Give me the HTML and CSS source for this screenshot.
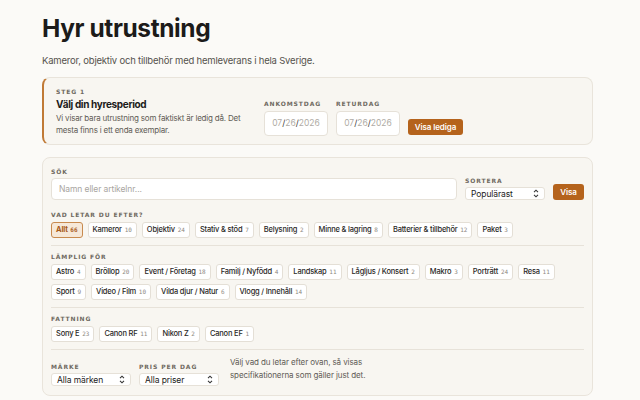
FILE: index.html
```html
<!DOCTYPE html>
<html lang="sv">
<head>
    <meta charset="UTF-8">
    <title>Hyr utrustning</title>
    <link rel="stylesheet" href="styles.css">
</head>
<body>
    <main class="page">
        <h1>Hyr utrustning</h1>
        <p class="lead">Kameror, objektiv och tillbehör med hemleverans i hela Sverige.</p>

        <!-- Steg 1 -->
        <section class="step-card">
            <div class="step-text">
                <div class="label">Steg 1</div>
                <h2>Välj din hyresperiod</h2>
                <p>Vi visar bara utrustning som faktiskt är ledig då. Det mesta finns i ett enda exemplar.</p>
            </div>
            <div class="dates">
                <div class="field">
                    <div class="label">Ankomstdag</div>
                    <div class="date-input">07<b>/</b>26<b>/</b>2026</div>
                </div>
                <div class="field">
                    <div class="label">Returdag</div>
                    <div class="date-input">07<b>/</b>26<b>/</b>2026</div>
                </div>
                <button class="btn btn-dates">Visa lediga</button>
            </div>
        </section>

        <!-- Filter -->
        <section class="filter-card">
            <div class="search-row">
                <div class="field grow">
                    <div class="label">Sök</div>
                    <div class="search-input">Namn eller artikelnr...</div>
                </div>
                <div class="field">
                    <div class="label">Sortera</div>
                    <div class="select">Populärast
                        <svg width="6" height="9" viewBox="0 0 6 9"><path d="M1 3.2 3 1.2 5 3.2M1 5.8 3 7.8 5 5.8" fill="none" stroke="#333" stroke-width="1.1"/></svg>
                    </div>
                </div>
                <button class="btn btn-show">Visa</button>
            </div>

            <div class="group first">
                <div class="label">Vad letar du efter?</div>
                <div class="chips">
                    <span class="chip active">Allt <i>66</i></span>
                    <span class="chip">Kameror <i>10</i></span>
                    <span class="chip">Objektiv <i>24</i></span>
                    <span class="chip">Stativ &amp; stöd <i>7</i></span>
                    <span class="chip">Belysning <i>2</i></span>
                    <span class="chip">Minne &amp; lagring <i>8</i></span>
                    <span class="chip">Batterier &amp; tillbehör <i>12</i></span>
                    <span class="chip">Paket <i>3</i></span>
                </div>
            </div>

            <div class="group">
                <div class="label">Lämplig för</div>
                <div class="chips">
                    <span class="chip">Astro <i>4</i></span>
                    <span class="chip">Bröllop <i>20</i></span>
                    <span class="chip">Event / Företag <i>18</i></span>
                    <span class="chip">Familj / Nyfödd <i>4</i></span>
                    <span class="chip">Landskap <i>11</i></span>
                    <span class="chip">Lågljus / Konsert <i>2</i></span>
                    <span class="chip">Makro <i>3</i></span>
                    <span class="chip">Porträtt <i>24</i></span>
                    <span class="chip">Resa <i>11</i></span>
                    <span class="chip">Sport <i>9</i></span>
                    <span class="chip">Video / Film <i>10</i></span>
                    <span class="chip">Vilda djur / Natur <i>6</i></span>
                    <span class="chip">Vlogg / Innehåll <i>14</i></span>
                </div>
            </div>

            <div class="group">
                <div class="label">Fattning</div>
                <div class="chips">
                    <span class="chip">Sony E <i>23</i></span>
                    <span class="chip">Canon RF <i>11</i></span>
                    <span class="chip">Nikon Z <i>2</i></span>
                    <span class="chip">Canon EF <i>1</i></span>
                </div>
            </div>

            <div class="group bottom-row">
                <div class="field">
                    <div class="label">Märke</div>
                    <div class="select">Alla märken
                        <svg width="6" height="9" viewBox="0 0 6 9"><path d="M1 3.2 3 1.2 5 3.2M1 5.8 3 7.8 5 5.8" fill="none" stroke="#333" stroke-width="1.1"/></svg>
                    </div>
                </div>
                <div class="field">
                    <div class="label">Pris per dag</div>
                    <div class="select">Alla priser
                        <svg width="6" height="9" viewBox="0 0 6 9"><path d="M1 3.2 3 1.2 5 3.2M1 5.8 3 7.8 5 5.8" fill="none" stroke="#333" stroke-width="1.1"/></svg>
                    </div>
                </div>
                <p class="hint">Välj vad du letar efter ovan, så visas specifikationerna som gäller just det.</p>
            </div>
        </section>
    </main>
</body>
</html>
```

FILE: styles.css
```css
body {
    margin: 0;
    background-color: #fbfaf7;
    font-family: Inter, "Noto Sans", sans-serif;
    color: #1c1b1a;
}

.page {
    width: 551px;
    margin-left: 42px;
    padding-top: 13px;
}

h1 {
    margin: 0;
    font-size: 24.5px;
    font-weight: 700;
    letter-spacing: -0.4px;
    line-height: 30px;
}

.lead {
    margin: 11px 0 0;
    font-size: 9.5px;
    letter-spacing: -0.2px;
    line-height: 14px;
    color: #55524d;
}

.label {
    font-family: "DejaVu Sans", sans-serif;
    font-size: 6px;
    font-weight: 700;
    letter-spacing: 0.9px;
    text-transform: uppercase;
    color: #6e6960;
    line-height: 9px;
}

.step-card {
    margin-top: 9px;
    height: 68px;
    box-sizing: border-box;
    display: flex;
    align-items: flex-start;
    background-color: #f8f6f1;
    border: 1px solid #e9e4db;
    border-left: 2px solid #c07a36;
    border-radius: 8px;
    padding: 9px 12px;
}

.step-text {
    width: 200px;
}

.step-text h2 {
    margin: 1px 0 1px;
    font-size: 10px;
    font-weight: 700;
    letter-spacing: -0.35px;
    line-height: 14px;
}

.step-text p {
    margin: 0;
    font-size: 8px;
    letter-spacing: -0.2px;
    line-height: 12px;
    color: #5f5b55;
    width: 186px;
}

.dates {
    display: flex;
    align-items: flex-end;
    gap: 8px;
    margin-left: auto;
    margin-right: 117px;
    margin-top: 12px;
}

.field .label {
    margin-bottom: 2px;
}

.dates .field .label {
    margin-bottom: 3px;
}

.date-input {
    width: 64px;
    height: 25px;
    box-sizing: border-box;
    border: 1px solid #e6e1d8;
    border-radius: 4px;
    background-color: #fff;
    font-size: 8.5px;
    line-height: 23px;
    text-align: center;
    color: #b0aca5;
}

.date-input b {
    color: #3a3733;
    font-weight: 400;
}

.btn {
    border: none;
    border-radius: 3px;
    background-color: #b5631c;
    color: #fff;
    font-family: Inter, sans-serif;
    font-weight: 600;
    font-size: 8px;
    letter-spacing: -0.1px;
    white-space: nowrap;
    padding: 0;
    cursor: pointer;
}

.btn-dates {
    width: 55px;
    height: 16px;
    margin-bottom: 1px;
}

.filter-card {
    margin-top: 12px;
    background-color: #f8f6f1;
    border: 1px solid #e9e4db;
    border-radius: 8px;
    padding: 9px 8px 8px;
    height: 239px;
    box-sizing: border-box;
}

.search-row {
    display: flex;
    align-items: flex-end;
    gap: 8px;
}

.grow {
    flex: 1;
}

.search-input {
    height: 22px;
    box-sizing: border-box;
    border: 1px solid #e6e1d8;
    border-radius: 4px;
    background-color: #fff;
    font-size: 8.5px;
    letter-spacing: -0.1px;
    line-height: 20px;
    padding: 0 7px;
    color: #a9a59f;
}

.select {
    width: 80px;
    height: 13px;
    display: flex;
    align-items: center;
    justify-content: space-between;
    box-sizing: border-box;
    border: 1px solid #e6e1d8;
    border-radius: 3px;
    background-color: #fff;
    font-size: 8.5px;
    letter-spacing: -0.1px;
    color: #1c1b1a;
    padding: 0 5px;
}

.btn-show {
    width: 31px;
    height: 16px;
}

.group {
    border-top: 1px solid #e7e2d9;
    margin-top: 7px;
    padding-top: 6px;
}

.group.first {
    border-top: none;
    margin-top: 10px;
    padding-top: 0;
}

.group.first .chips {
    margin-bottom: 1px;
}

.chips {
    display: flex;
    flex-wrap: wrap;
    gap: 4px 5px;
    margin-top: 3px;
}

.chip {
    height: 16px;
    box-sizing: border-box;
    border: 1px solid #e4dfd6;
    border-radius: 3px;
    background-color: #fff;
    font-size: 7.5px;
    font-weight: 500;
    letter-spacing: -0.2px;
    line-height: 14px;
    padding: 0 4px;
    color: #2a2826;
    white-space: nowrap;
}

.chip i {
    font-style: normal;
    font-family: "DejaVu Sans Mono", monospace;
    font-size: 6px;
    letter-spacing: 0;
    color: #8d887f;
    margin-left: 1px;
}

.chip.active {
    background-color: #f6e8d8;
    border-color: #c88a4e;
    color: #a95a18;
    font-weight: 700;
}

.chip.active i {
    color: #a95a18;
}

.bottom-row {
    display: flex;
    align-items: flex-start;
    gap: 8px;
}

.bottom-row .field {
    margin-top: 6px;
}

.hint {
    margin: 0 0 0 3px;
    font-size: 8px;
    letter-spacing: -0.1px;
    line-height: 13px;
    color: #5f5b55;
    width: 150px;
}
```
